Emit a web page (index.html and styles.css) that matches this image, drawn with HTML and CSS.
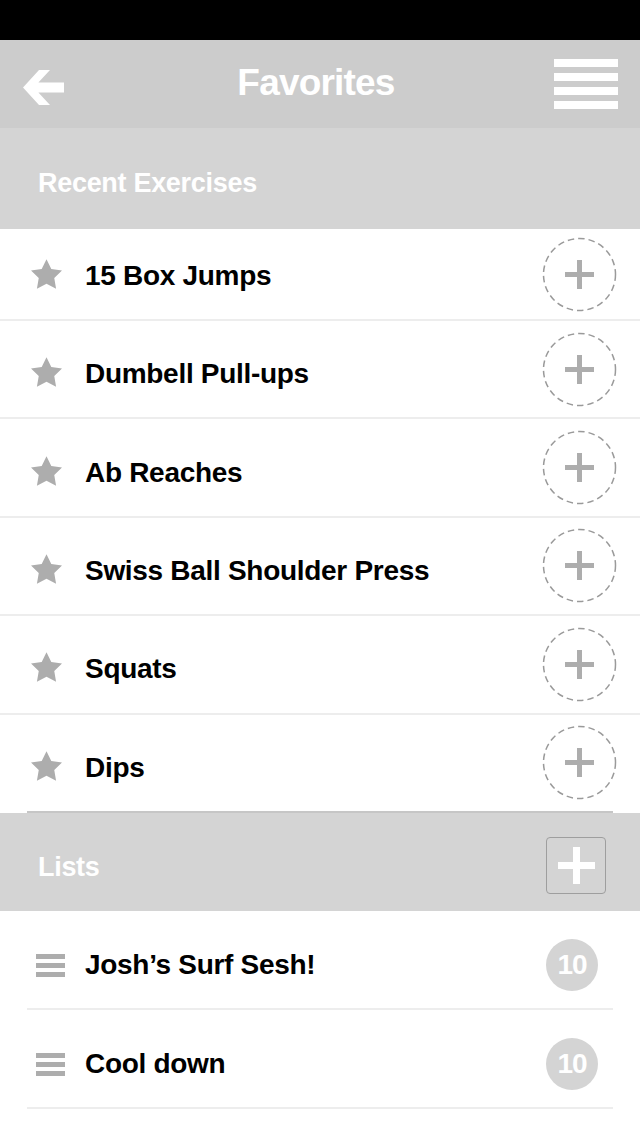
FILE: index.html
```html
<!DOCTYPE html>
<html lang="en">
<head>
    <meta charset="UTF-8">
    <meta name="viewport" content="width=device-width, initial-scale=1.0">
    <title>Favorites</title>
    <link rel="stylesheet" href="styles.css">
</head>
<body>
    <div class="status-bar"></div>
    <header class="top-bar">
        <svg class="back" width="41" height="35" viewBox="0 0 41 35">
            <polygon points="0,17.5 16,0 27,0 15.4,12.5 41,12.5 41,22.5 15.4,22.5 27,35 16,35" fill="#fff"/>
        </svg>
        <h1>Favorites</h1>
        <div class="menu">
            <span></span><span></span><span></span><span></span>
        </div>
    </header>

    <div class="section-head recent-head">
        <h2>Recent Exercises</h2>
    </div>
    <ul class="exercises" id="exercises"></ul>
    <div class="rule-wrap"><div class="rule"></div></div>

    <div class="section-head lists-head">
        <h2>Lists</h2>
        <button class="add-list">
            <svg width="37" height="37" viewBox="0 0 37 37">
                <rect x="15" y="0" width="7" height="37" fill="#fff"/>
                <rect x="0" y="15" width="37" height="7" fill="#fff"/>
            </svg>
        </button>
    </div>
    <ul class="lists" id="lists"></ul>

    <script>
        document.addEventListener('DOMContentLoaded', () => {
            const exercises = ['15 Box Jumps', 'Dumbell Pull-ups', 'Ab Reaches', 'Swiss Ball Shoulder Press', 'Squats', 'Dips'];
            const lists = [
                { name: 'Josh\u2019s Surf Sesh!', count: 10 },
                { name: 'Cool down', count: 10 }
            ];
            const exercisesList = document.getElementById('exercises');
            const listsList = document.getElementById('lists');

            const star = '<svg class="star" width="31" height="30" viewBox="2 2 20 19.1"><polygon points="12,2 15.09,8.26 22,9.27 17,14.14 18.18,21.02 12,17.77 5.82,21.02 7,14.14 2,9.27 8.91,8.26" fill="#adadad"/></svg>';
            const addCircle = '<svg class="add" width="75" height="75" viewBox="0 0 75 75"><circle cx="37.5" cy="37.5" r="36" fill="none" stroke="#9a9a9a" stroke-width="1.5" stroke-dasharray="6.5 4"/><rect x="35" y="23" width="5" height="29" fill="#adadad"/><rect x="23" y="35" width="29" height="5" fill="#adadad"/></svg>';

            exercises.forEach((name, index) => {
                const li = document.createElement('li');
                li.className = index === 0 ? 'exercise first' : 'exercise';
                if (index === exercises.length - 1) li.className += ' last';
                li.innerHTML = star + '<span class="name"></span>' + addCircle;
                li.querySelector('.name').textContent = name;
                exercisesList.appendChild(li);
            });

            lists.forEach(list => {
                const li = document.createElement('li');
                li.className = 'list-item';
                li.innerHTML = '<div class="drag"><span></span><span></span><span></span></div><span class="name"></span><span class="count"></span>';
                li.querySelector('.name').textContent = list.name;
                li.querySelector('.count').textContent = list.count;
                listsList.appendChild(li);
            });
        });
    </script>
</body>
</html>
```

FILE: styles.css
```css
body {
    margin: 0;
    background-color: #fff;
    font-family: "Liberation Sans", Arial, sans-serif;
    color: #000;
}
ul {
    list-style: none;
    margin: 0;
    padding: 0;
}
.status-bar {
    height: 40px;
    background-color: #000;
}
.top-bar {
    height: 88px;
    background-color: #cccccc;
    display: flex;
    align-items: center;
    justify-content: space-between;
    padding: 0 23px;
    box-sizing: border-box;
}
.top-bar h1 {
    margin: 0;
    color: #fff;
    font-size: 37px;
    font-weight: bold;
    letter-spacing: -0.8px;
    padding-left: 14px;
    margin-top: -2px;
}
.back {
    display: block;
    margin-top: 6px;
}
.menu {
    display: flex;
    flex-direction: column;
    gap: 6px;
    width: 64px;
    margin-right: -1px;
}
.menu span {
    display: block;
    height: 8px;
    background-color: #fff;
}
.section-head {
    background-color: #d4d4d4;
    display: flex;
    align-items: center;
    justify-content: space-between;
    box-sizing: border-box;
    padding: 0 34px 0 38px;
}
.section-head h2 {
    margin: 0;
    color: #fff;
    font-size: 27px;
    font-weight: bold;
    letter-spacing: -0.3px;
}
.recent-head {
    height: 101px;
    padding-top: 10px;
}
.lists-head {
    height: 98px;
    padding-top: 8px;
}
.lists-head h2 {
    padding-top: 4px;
}
.exercise {
    display: flex;
    align-items: center;
    box-sizing: border-box;
    height: 98.4px;
    padding: 7px 23px 0 31px;
    border-bottom: 2px solid #ededed;
}
.exercise.first {
    height: 92px;
    padding-top: 0;
}
.exercise.last {
    height: 96.4px;
    border-bottom: none;
}
.star {
    display: block;
    flex-shrink: 0;
    margin-top: -1px;
}
.name {
    flex: 1;
    font-size: 28px;
    font-weight: bold;
    margin-left: 23px;
    letter-spacing: -0.3px;
    padding-top: 3px;
}
.add {
    display: block;
    margin-top: -7px;
}
.exercise.first .add {
    margin-top: 1px;
}
.rule-wrap {
    background-color: #fff;
}
.rule {
    margin: 0 27px;
    height: 2px;
    background-color: #c6c6c6;
}
.add-list {
    width: 60px;
    height: 57px;
    padding: 0;
    border: 1px solid #9e9e9e;
    border-radius: 4px;
    background: none;
    display: flex;
    align-items: center;
    justify-content: center;
}
.add-list svg {
    display: block;
}
.list-item {
    display: flex;
    align-items: center;
    height: 97px;
    margin: 0 27px;
    padding: 0 15px 0 9px;
    border-bottom: 2px solid #ededed;
}
.drag {
    display: flex;
    flex-direction: column;
    gap: 4px;
    width: 29px;
    flex-shrink: 0;
    margin-top: 12px;
}
.drag span {
    display: block;
    height: 5px;
    background-color: #adadad;
}
.list-item .name {
    margin-left: 20px;
    margin-top: 11px;
    padding-top: 0;
}
.count {
    width: 52px;
    height: 52px;
    border-radius: 50%;
    background-color: #d4d4d4;
    color: #fff;
    font-size: 28px;
    font-weight: bold;
    letter-spacing: -1px;
    display: flex;
    align-items: center;
    justify-content: center;
    margin-top: 12px;
}
```
